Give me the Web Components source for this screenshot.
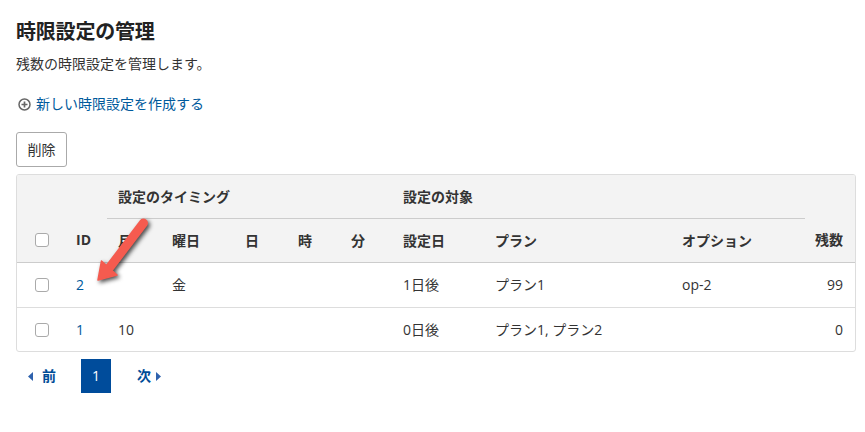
<!DOCTYPE html>
<html lang="ja">
<head>
<meta charset="utf-8">
<title>時限設定の管理</title>
<style>
  html, body { margin: 0; background: #fff; }
  body { font: 14px/20px "Open Sans", "Noto Sans CJK JP", sans-serif; color: #333; }
</style>
</head>
<body>
<limit-page>
  <page-heading title-text="時限設定の管理">残数の時限設定を管理します。</page-heading>
  <add-link>新しい時限設定を作成する</add-link>
  <plain-button>削除</plain-button>
  <limit-table></limit-table>
  <page-nav></page-nav>
  <callout-arrow></callout-arrow>
</limit-page>

<script>
// Contenedor de la página
class LimitPage extends HTMLElement {
  constructor() {
    super();
    this.attachShadow({mode: 'open'});
    this.shadowRoot.innerHTML = `
      <style>
        :host { display: flex; flex-direction: column; align-items: flex-start; position: relative; box-sizing: border-box; width: 865px; height: 432px; padding: 18px 9px 0 16px; }
      </style>
      <slot></slot>`;
  }
}

class PageHeading extends HTMLElement {
  constructor() {
    super();
    this.attachShadow({mode: 'open'});
    this.shadowRoot.innerHTML = `
      <style>
        :host { display: block; }
        h1 { margin: 0 0 6px; font-size: 20px; line-height: 28px; font-weight: 700; color: #222; letter-spacing: -.2px; }
        p { margin: 0; line-height: 24px; font-size: 14px; }
      </style>
      <h1>${this.getAttribute('title-text')}</h1>
      <p><slot></slot></p>`;
  }
}

class AddLink extends HTMLElement {
  constructor() {
    super();
    this.attachShadow({mode: 'open'});
    this.shadowRoot.innerHTML = `
      <style>
        :host { display: flex; align-items: center; gap: 5px; margin: 16px 0 0 2px; height: 24px; color: #005a9c; }
        svg { display: block; margin-top: 1px; }
      </style>
      <svg width="13" height="13" viewBox="0 0 13 13" fill="none" stroke="#666" stroke-width="1.5">
        <circle cx="6.5" cy="6.5" r="5.5"/>
        <path d="M3.5 6.5h6M6.5 3.5v6" stroke-width="1.7"/>
      </svg>
      <slot></slot>`;
  }
}

class PlainButton extends HTMLElement {
  constructor() {
    super();
    this.attachShadow({mode: 'open'});
    this.shadowRoot.innerHTML = `
      <style>
        :host { display: block; margin-top: 16px; }
        button { display: block; box-sizing: border-box; width: 51px; height: 35px; padding: 0; background: #fff; border: 1px solid #aaa; border-radius: 3px; font: inherit; color: #333; }
      </style>
      <button><slot></slot></button>`;
  }
}

class LimitTable extends HTMLElement {
  constructor() {
    super();
    this.attachShadow({mode: 'open'});
    const rows = [
      {id: 2, month: '', weekday: '金', when: '1日後', plan: 'プラン1', option: 'op-2', left: 99},
      {id: 1, month: '10', weekday: '', when: '0日後', plan: 'プラン1, プラン2', option: '', left: 0}
    ];
    const cells = rows.map(r => `
      <tr>
        <td class="check"><span class="box"></span></td>
        <td><a>${r.id}</a></td>
        <td>${r.month}</td><td>${r.weekday}</td><td></td><td></td><td></td>
        <td>${r.when}</td><td>${r.plan}</td><td>${r.option}</td>
        <td class="num">${r.left}</td>
      </tr>`).join('');
    this.shadowRoot.innerHTML = `
      <style>
        :host { display: block; box-sizing: border-box; width: 840px; margin-top: 7px; border: 1px solid #ddd; border-radius: 3px; overflow: hidden; }
        table { width: 838px; table-layout: fixed; border-collapse: collapse; }
        thead { background: #f3f3f3; }
        th { font-weight: 700; text-align: left; color: #333; padding: 0 0 0 11px; }
        td { padding: 0 0 0 11px; height: 44px; border-top: 1px solid #ddd; white-space: nowrap; }
        tbody tr:last-child td { height: 43px; }
        .top th { height: 43px; }
        .top th.group { border-bottom: 1px solid #ccc; }
        .sub th { height: 43px; }
        .sub th:first-child, .check { padding-left: 18px; }
        tbody tr:first-child td { border-top: 1px solid #ccc; }
        .num, th.num { text-align: right; padding: 0 12px 0 0; }
        a { color: #005a9c; }
        .box { display: block; box-sizing: border-box; width: 14px; height: 14px; background: #fff; border: 1px solid #aaa; border-radius: 3px; }
      </style>
      <table>
        <colgroup>
          <col style="width:48px"><col style="width:42px"><col style="width:54px"><col style="width:73px">
          <col style="width:53px"><col style="width:53px"><col style="width:52px"><col style="width:92px">
          <col style="width:187px"><col style="width:134px"><col style="width:50px">
        </colgroup>
        <thead>
          <tr class="top">
            <th colspan="2"></th>
            <th class="group" colspan="5">設定のタイミング</th>
            <th class="group" colspan="3">設定の対象</th>
            <th></th>
          </tr>
          <tr class="sub">
            <th><span class="box"></span></th>
            <th>ID</th><th>月</th><th>曜日</th><th>日</th><th>時</th><th>分</th>
            <th>設定日</th><th>プラン</th><th>オプション</th><th class="num">残数</th>
          </tr>
        </thead>
        <tbody>${cells}</tbody>
      </table>`;
  }
}

class PageNav extends HTMLElement {
  constructor() {
    super();
    this.attachShadow({mode: 'open'});
    this.shadowRoot.innerHTML = `
      <style>
        :host { display: flex; align-items: center; height: 34px; margin-top: 7px; font-weight: 700; color: #004c97; }
        .prev { display: flex; align-items: center; gap: 9px; margin-left: 12px; width: 53px; }
        .next { display: flex; align-items: center; gap: 5px; margin-left: 26px; }
        .cur { display: flex; align-items: center; justify-content: center; width: 30px; height: 34px; background: #004c9b; color: #fff; font-weight: 400; }
        svg { display: block; }
      </style>
      <span class="prev">
        <svg width="5" height="9" viewBox="0 0 5 9"><path d="M5 0v9L0 4.5z" fill="#2f62ad"/></svg>前
      </span>
      <span class="cur">1</span>
      <span class="next">次
        <svg width="5" height="9" viewBox="0 0 5 9"><path d="M0 0v9l5-4.5z" fill="#2f62ad"/></svg>
      </span>`;
  }
}

// Flecha de anotación superpuesta a la captura
class CalloutArrow extends HTMLElement {
  constructor() {
    super();
    this.attachShadow({mode: 'open'});
    this.shadowRoot.innerHTML = `
      <style>
        :host { position: absolute; left: 90px; top: 215px; width: 65px; height: 75px; pointer-events: none; }
        svg { display: block; overflow: visible; filter: drop-shadow(2px 2px 2px rgba(0,0,0,.7)); }
      </style>
      <svg width="65" height="75" viewBox="90 215 65 75">
        <path d="M143.500 223 110 267" stroke="#f55b4f" stroke-width="9" stroke-linecap="round" fill="none"/>
        <path d="M98 280 101.500 261 117 275z" fill="#f55b4f" stroke="#f55b4f" stroke-width="1.500" stroke-linejoin="round"/>
      </svg>`;
  }
}

customElements.define('limit-page', LimitPage);
customElements.define('page-heading', PageHeading);
customElements.define('add-link', AddLink);
customElements.define('plain-button', PlainButton);
customElements.define('limit-table', LimitTable);
customElements.define('page-nav', PageNav);
customElements.define('callout-arrow', CalloutArrow);
</script>
</body>
</html>
